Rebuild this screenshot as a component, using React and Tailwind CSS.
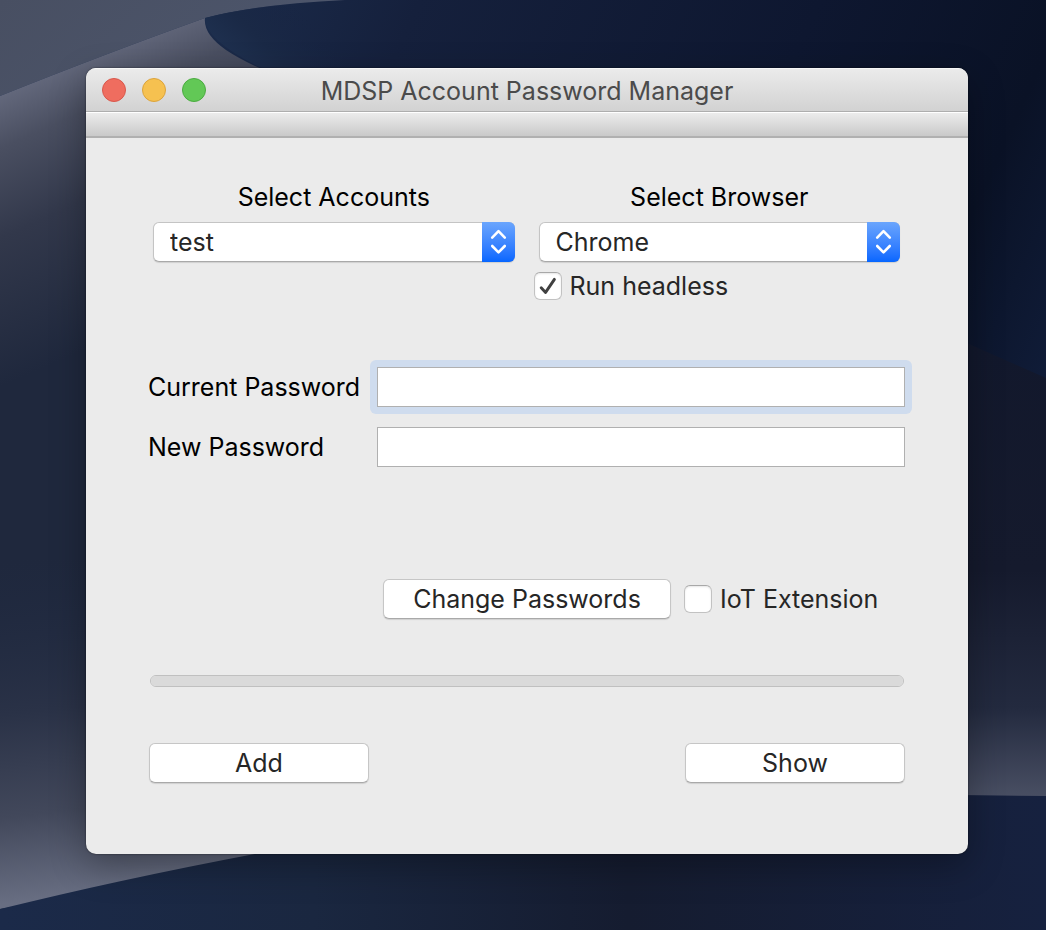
import React from "react";

function Wallpaper() {
  return (
    <svg
      aria-hidden="true"
      className="absolute inset-0 -z-10 h-full w-full"
      viewBox="0 0 1046 930"
      preserveAspectRatio="none"
    >
      <defs>
        <linearGradient id="sky" gradientUnits="userSpaceOnUse" x1="220" y1="0" x2="1046" y2="380">
          <stop offset="0" stopColor="#1b2b4a" />
          <stop offset="0.2" stopColor="#15203c" />
          <stop offset="0.6" stopColor="#0e1730" />
          <stop offset="0.85" stopColor="#0a1226" />
          <stop offset="1" stopColor="#101c38" />
        </linearGradient>
        <linearGradient id="haze" x1="0" y1="0" x2="1" y2="0.3">
          <stop offset="0" stopColor="#484f62" />
          <stop offset="1" stopColor="#4d566c" />
        </linearGradient>
        <linearGradient id="dune" gradientUnits="userSpaceOnUse" x1="20" y1="80" x2="130" y2="330">
          <stop offset="0" stopColor="#666b7f" />
          <stop offset="0.2" stopColor="#4a4f61" />
          <stop offset="0.5" stopColor="#32384b" />
          <stop offset="1" stopColor="#1f283d" />
        </linearGradient>
        <linearGradient id="duneFoot" gradientUnits="userSpaceOnUse" x1="0" y1="560" x2="40" y2="900">
          <stop offset="0" stopColor="#202a42" stopOpacity="0" />
          <stop offset="0.45" stopColor="#2a3247" />
          <stop offset="0.75" stopColor="#42485b" />
          <stop offset="1" stopColor="#686e82" />
        </linearGradient>
        <linearGradient id="valley" x1="0" y1="0" x2="0" y2="1">
          <stop offset="0" stopColor="#12182c" />
          <stop offset="0.5" stopColor="#151a2d" />
          <stop offset="0.8" stopColor="#232a3f" />
          <stop offset="1" stopColor="#4a5064" />
        </linearGradient>
        <linearGradient id="front" x1="0" y1="0" x2="1" y2="0">
          <stop offset="0" stopColor="#1b2a49" />
          <stop offset="0.3" stopColor="#1a2740" />
          <stop offset="0.6" stopColor="#151c30" />
          <stop offset="1" stopColor="#16213f" />
        </linearGradient>
        <linearGradient id="nook" gradientUnits="userSpaceOnUse" x1="230" y1="80" x2="300" y2="10">
          <stop offset="0" stopColor="#203353" />
          <stop offset="0.5" stopColor="#1a2946" />
          <stop offset="1" stopColor="#172442" stopOpacity="0" />
        </linearGradient>
      </defs>
      <rect width="1046" height="930" fill="url(#sky)" />
      <path d="M0 0H345Q260 4 205 18Q110 52 0 96Z" fill="url(#haze)" />
      <path d="M0 96Q110 52 205 18Q203 34 226 50Q250 66 290 80V900H0Z" fill="url(#dune)" />
      <path d="M205 18Q260 4 345 0H500V72H270Q205 42 205 18Z" fill="url(#nook)" />
      <path d="M0 560H300V860L0 909Z" fill="url(#duneFoot)" />
      <path d="M960 340L1046 378V800H960Z" fill="url(#valley)" />
      <path d="M0 909Q125 878 270 851L960 795L1046 796V930H0Z" fill="url(#front)" />
    </svg>
  );
}

function PopUp({ id, label, options }) {
  return (
    <div className="flex flex-col gap-[9px]">
      <label htmlFor={id} className="text-center leading-8 text-black">
        {label}
      </label>
      <div className="relative mx-[5px]">
        <select
          id={id}
          className="block h-10 w-full appearance-none rounded-md border border-[#c4c4c4] border-b-[#a9a9a9] bg-white pr-10 pl-4 text-[#262626] shadow-[0_1px_1px_rgba(0,0,0,0.12)] outline-none"
        >
          {options.map((option) => (
            <option key={option}>{option}</option>
          ))}
        </select>
        <span className="pointer-events-none absolute inset-y-0 right-0 flex w-[33px] items-center justify-center rounded-r-md bg-linear-to-b from-[#6aa5fd] to-[#0566ff]">
          <svg
            width="17"
            height="26"
            viewBox="0 0 17 26"
            fill="none"
            stroke="white"
            strokeWidth="2.6"
            strokeLinecap="round"
            strokeLinejoin="round"
          >
            <path d="M2.2 8.6 8.5 2.2 14.8 8.6M2.2 17 8.5 23.4 14.8 17" />
          </svg>
        </span>
      </div>
    </div>
  );
}

function CheckBox({ label, defaultChecked }) {
  return (
    <label className="flex items-center gap-2 text-[#262626]">
      <span className="relative flex">
        <input
          type="checkbox"
          defaultChecked={defaultChecked}
          className="peer size-7 appearance-none rounded-md border border-[#c2c2c2] border-t-[#a8a8a8] bg-white shadow-[inset_0_1px_2px_rgba(0,0,0,0.1)]"
        />
        <svg
          className="pointer-events-none absolute inset-0 hidden size-7 peer-checked:block"
          viewBox="0 0 28 28"
          fill="none"
          stroke="#404040"
          strokeWidth="2.9"
          strokeLinecap="round"
          strokeLinejoin="round"
        >
          <path d="M7.2 15.8 11.6 20.4 20.4 7.4" />
        </svg>
      </span>
      {label}
    </label>
  );
}

function PushButton({ children, className }) {
  return (
    <button
      type="button"
      className={`h-10 rounded-md border border-[#c6c6c6] border-b-[#a9a9a9] bg-white text-[#262626] shadow-[0_1px_1px_rgba(0,0,0,0.12)] ${className}`}
    >
      {children}
    </button>
  );
}

function PasswordField({ id, label, autoFocus }) {
  return (
    <div className="grid grid-cols-[222px_1fr] items-center">
      <label htmlFor={id} className="text-black">
        {label}
      </label>
      <div className="-my-[7px] -mr-[7px] flex rounded-md p-[7px] focus-within:bg-[#cfdcee]">
        <input
          id={id}
          type="password"
          autoFocus={autoFocus}
          className="h-10 w-full border border-[#b0b0b0] bg-white px-2 outline-none"
        />
      </div>
    </div>
  );
}

export default function App() {
  return (
    <main className="relative isolate flex min-h-screen pt-[68px] pr-[78px] pb-[76px] pl-[86px] font-['Inter','Liberation_Sans',sans-serif] text-[25px] leading-8">
      <Wallpaper />
      <section className="flex flex-1 flex-col overflow-hidden rounded-[10px] bg-[#ebebeb] shadow-[0_0_2px_rgba(0,0,0,0.6),0_12px_36px_rgba(0,0,0,0.3)]">
        <header className="grid h-11 grid-cols-[1fr_auto_1fr] items-center border-t border-b border-t-[#f6f6f6] border-b-[#aeaeae] bg-linear-to-b from-[#ebebeb] to-[#d2d2d2] px-4">
          <div className="flex gap-4">
            <button type="button" aria-label="Close" className="size-6 rounded-full border border-[#d8584c] bg-[#ef6d5f]" />
            <button type="button" aria-label="Minimize" className="size-6 rounded-full border border-[#dba33c] bg-[#f6c150]" />
            <button type="button" aria-label="Zoom" className="size-6 rounded-full border border-[#4bab40] bg-[#62c856]" />
          </div>
          <h1 className="pt-0.5 text-[#4b4b4b]">MDSP Account Password Manager</h1>
        </header>
        <div className="h-[26px] border-t border-b-2 border-t-white border-b-[#b0b0b0] bg-linear-to-b from-[#ececec] to-[#c9c9c9]" />
        <form className="flex flex-col pt-[43px] pr-[63px] pl-[62px]">
          <div className="grid grid-cols-2 gap-x-[14px] gap-y-2">
            <PopUp id="accounts" label="Select Accounts" options={["test"]} />
            <PopUp id="browser" label="Select Browser" options={["Chrome"]} />
            <div className="col-start-2 flex">
              <CheckBox label="Run headless" defaultChecked />
            </div>
          </div>
          <div className="mt-[65px] flex flex-col gap-5">
            <PasswordField id="current" label="Current Password" autoFocus />
            <PasswordField id="new" label="New Password" />
          </div>
          <div className="mt-28 flex items-center gap-[13px] pl-[235px]">
            <PushButton className="w-[288px]">Change Passwords</PushButton>
            <CheckBox label="IoT Extension" />
          </div>
          <div className="mt-14 flex pr-px pl-0.5">
            <progress
              aria-label="Progress"
              value="0"
              max="100"
              className="block h-3 w-full appearance-none overflow-hidden rounded-md border border-[#c0c0c0] bg-[#dadada] [&::-webkit-progress-bar]:bg-[#dadada]"
            />
          </div>
          <div className="mt-14 flex justify-between pl-px">
            <PushButton className="w-[220px]">Add</PushButton>
            <PushButton className="w-[220px]">Show</PushButton>
          </div>
        </form>
      </section>
    </main>
  );
}
